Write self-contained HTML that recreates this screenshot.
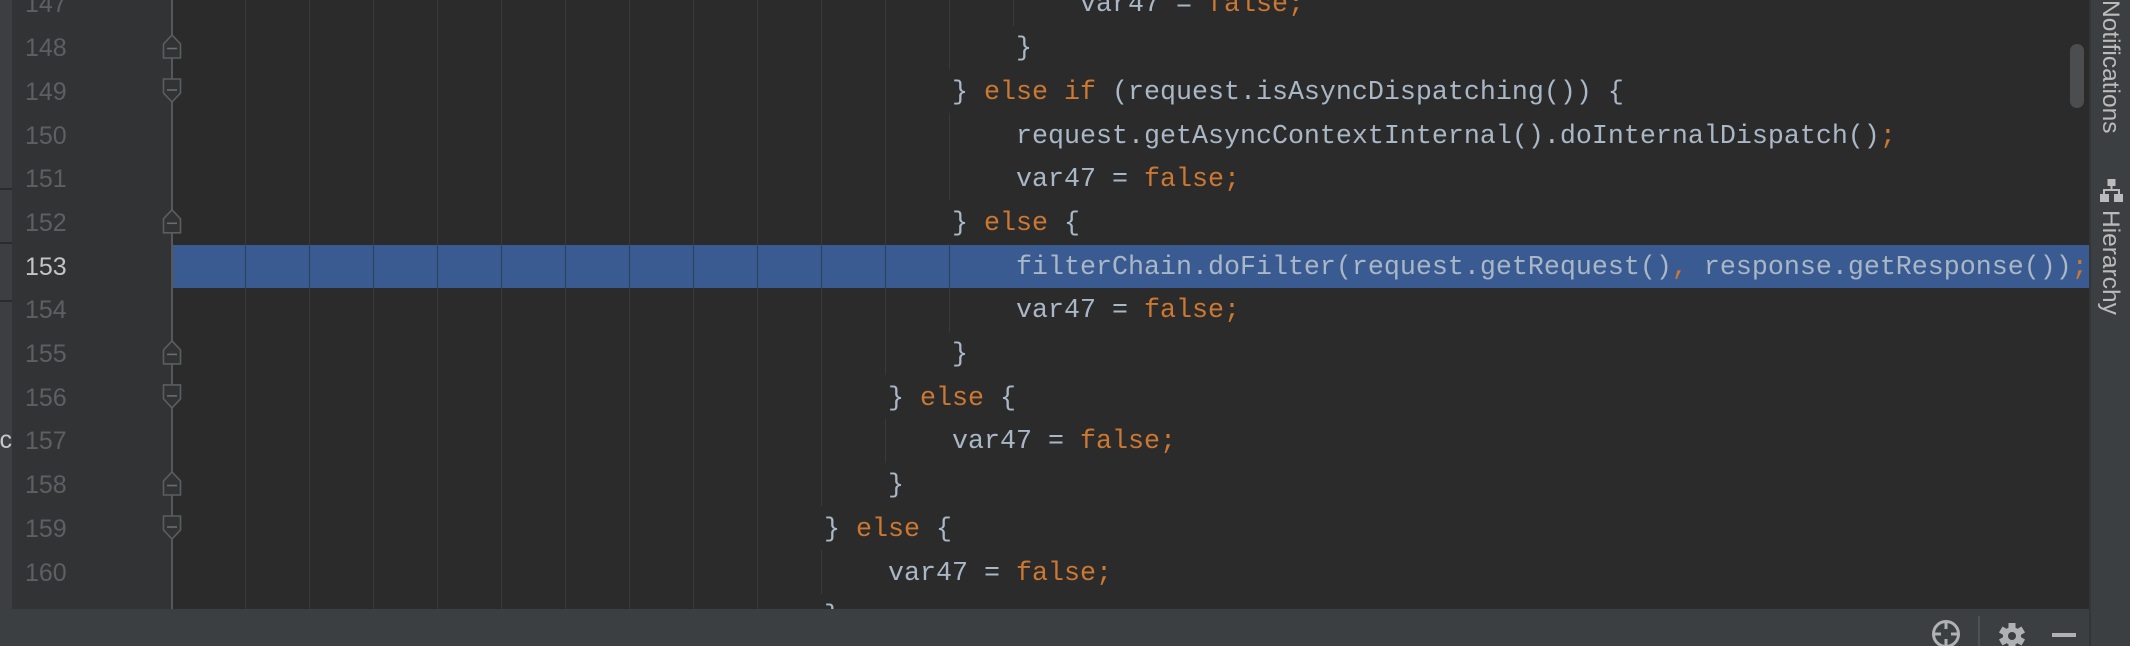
<!DOCTYPE html>
<html><head><meta charset="utf-8"><style>
html,body{margin:0;padding:0}
body{width:2130px;height:646px;position:relative;overflow:hidden;background:#2b2b2b;font-family:"Liberation Mono",monospace}
.abs{position:absolute}
.ln{position:absolute;left:0;height:43.7px;line-height:43.7px;font-size:26.67px;color:#a9b7c6;white-space:pre}
.k{color:#cc7832}
.num{position:absolute;left:25px;width:60px;height:43.7px;line-height:43.7px;font-family:"Liberation Sans",sans-serif;font-size:25px;color:#5d6063}
.g{position:absolute;width:1.5px;background:#3a3a3a}
</style></head><body>
<div class="abs" style="left:0;top:0;width:12px;height:609px;background:#3c3e41"></div>
<div class="abs" style="left:0;top:188px;width:12px;height:2px;background:#2b2b2b"></div>
<div class="abs" style="left:0;top:242px;width:12px;height:2px;background:#2b2b2b"></div>
<div class="abs" style="left:0;top:300px;width:12px;height:2px;background:#2b2b2b"></div>
<div class="abs" style="left:-6px;top:426px;font-family:'Liberation Sans',sans-serif;font-size:25px;color:#c8c8c8">ic</div>
<div class="abs" style="left:12px;top:0;width:160px;height:609px;background:#313335"></div>
<div class="abs" style="left:171px;top:0;width:1.5px;height:609px;background:#555759"></div>
<div class="abs" style="left:173px;top:244.5px;width:1916px;height:43.5px;background:#395b91"></div>

<div id="guides"></div>
<div id="nums"></div>
<div id="code"></div>

<svg class="abs" style="left:0;top:0" width="200" height="609">
<g fill="#313335" stroke="#5b5e61" stroke-width="1.6">
<path d="M163.5 58 L163.5 44 L172 35 L180.5 44 L180.5 58 Z"/>
<path d="M163.5 58 L163.5 44 L172 35 L180.5 44 L180.5 58 Z" transform="translate(0,174.8)"/>
<path d="M163.5 58 L163.5 44 L172 35 L180.5 44 L180.5 58 Z" transform="translate(0,305.9)"/>
<path d="M163.5 58 L163.5 44 L172 35 L180.5 44 L180.5 58 Z" transform="translate(0,437)"/>
<path d="M163.5 79 L180.5 79 L180.5 93 L172 102 L163.5 93 Z"/>
<path d="M163.5 79 L180.5 79 L180.5 93 L172 102 L163.5 93 Z" transform="translate(0,305.9)"/>
<path d="M163.5 79 L180.5 79 L180.5 93 L172 102 L163.5 93 Z" transform="translate(0,437)"/>
</g>
<g stroke="#6a6d70" stroke-width="1.6">
<line x1="167" y1="48.5" x2="177" y2="48.5"/>
<line x1="167" y1="223.3" x2="177" y2="223.3"/>
<line x1="167" y1="354.4" x2="177" y2="354.4"/>
<line x1="167" y1="485.5" x2="177" y2="485.5"/>
<line x1="167" y1="90" x2="177" y2="90"/>
<line x1="167" y1="395.9" x2="177" y2="395.9"/>
<line x1="167" y1="527" x2="177" y2="527"/>
</g>
</svg>

<div class="abs" style="left:2070px;top:44px;width:14px;height:64px;border-radius:7px;background:#4b4d4f"></div>

<div class="abs" style="left:0;top:609px;width:2090px;height:37px;background:#3c3f41"></div>
<div class="abs" style="left:1978px;top:616px;width:2px;height:30px;background:#4e5154"></div>
<svg class="abs" style="left:1900px;top:609px" width="190" height="37">
<circle cx="46" cy="25" r="12.5" fill="none" stroke="#afb1b3" stroke-width="3"/>
<g stroke="#afb1b3" stroke-width="3"><line x1="46" y1="12" x2="46" y2="20"/><line x1="46" y1="30" x2="46" y2="37"/><line x1="33" y1="25" x2="41" y2="25"/><line x1="51" y1="25" x2="59" y2="25"/></g>
<g transform="translate(112,27)" fill="#afb1b3">
<circle r="9"/>
<rect x="-3.5" y="-13" width="7" height="26"/>
<rect x="-3.5" y="-13" width="7" height="26" transform="rotate(60)"/>
<rect x="-3.5" y="-13" width="7" height="26" transform="rotate(120)"/>
<circle r="4" fill="#3c3f41"/>
</g>
<rect x="152" y="24" width="24" height="4" fill="#afb1b3"/>
</svg>

<div class="abs" style="left:2089px;top:0;width:41px;height:646px;background:#3c3f41;border-left:2px solid #333537;box-sizing:border-box"></div>
<div class="abs" style="left:2097px;top:0;transform-origin:0 0;transform:translate(27px,0) rotate(90deg);font-family:'Liberation Sans',sans-serif;font-size:24.5px;color:#bbbbbb;white-space:nowrap;line-height:27px">Notifications</div>
<svg class="abs" style="left:2100px;top:179px" width="24" height="24">
<rect x="7.5" y="0" width="8" height="7" fill="#bbbbbb"/>
<rect x="10.5" y="7" width="2" height="4" fill="#bbbbbb"/>
<rect x="3" y="10" width="17" height="2" fill="#bbbbbb"/>
<rect x="3" y="10" width="2" height="5" fill="#bbbbbb"/>
<rect x="18" y="10" width="2" height="5" fill="#bbbbbb"/>
<rect x="0" y="15" width="9" height="8" fill="#bbbbbb"/>
<rect x="14" y="15" width="9" height="8" fill="#bbbbbb"/>
</svg>
<div class="abs" style="left:2097px;top:210px;transform-origin:0 0;transform:translate(27px,0) rotate(90deg);font-family:'Liberation Sans',sans-serif;font-size:24.5px;color:#bbbbbb;white-space:nowrap;line-height:27px">Hierarchy</div>

<script>
(function(){
var x0=181, cw=16, lh=43.7, t0=-18.05, dy=2.5, dx=3;
var lines=[
[147,56,'var47 = <span class="k">false;</span>'],
[148,52,'}'],
[149,48,'} <span class="k">else if</span> (request.isAsyncDispatching()) {'],
[150,52,'request.getAsyncContextInternal().doInternalDispatch()<span class="k">;</span>'],
[151,52,'var47 = <span class="k">false;</span>'],
[152,48,'} <span class="k">else</span> {'],
[153,52,'filterChain.doFilter(request.getRequest()<span class="k">,</span> response.getResponse())<span class="k">;</span>'],
[154,52,'var47 = <span class="k">false;</span>'],
[155,48,'}'],
[156,44,'} <span class="k">else</span> {'],
[157,48,'var47 = <span class="k">false;</span>'],
[158,44,'}'],
[159,40,'} <span class="k">else</span> {'],
[160,44,'var47 = <span class="k">false;</span>'],
[161,40,'}']
];
var code='',nums='',gd='';
lines.forEach(function(l,i){
  var top=t0+i*lh;
  code+='<div class="ln" style="top:'+(top+dy)+'px;left:'+(x0+dx+l[1]*cw)+'px">'+l[2]+'</div>';
  if(l[0]<=160){
    var cur=l[0]==153;
    nums+='<div class="num" style="top:'+(top+1.5)+'px;'+(cur?'color:#c4c4c4':'')+'">'+l[0]+'</div>';
  }
  for(var k=1;k<=13;k++){
    if(l[1]>4*k){
      var col=(l[0]==153)?'#2f3f58':'#3a3a3a';
      gd+='<div class="g" style="left:'+(x0+64*k-0.5)+'px;top:'+top+'px;height:'+lh+'px;background:'+col+'"></div>';
    }
  }
});
document.getElementById('code').innerHTML=code;
document.getElementById('nums').innerHTML=nums;
document.getElementById('guides').innerHTML=gd;
})();
</script>
</body></html>
